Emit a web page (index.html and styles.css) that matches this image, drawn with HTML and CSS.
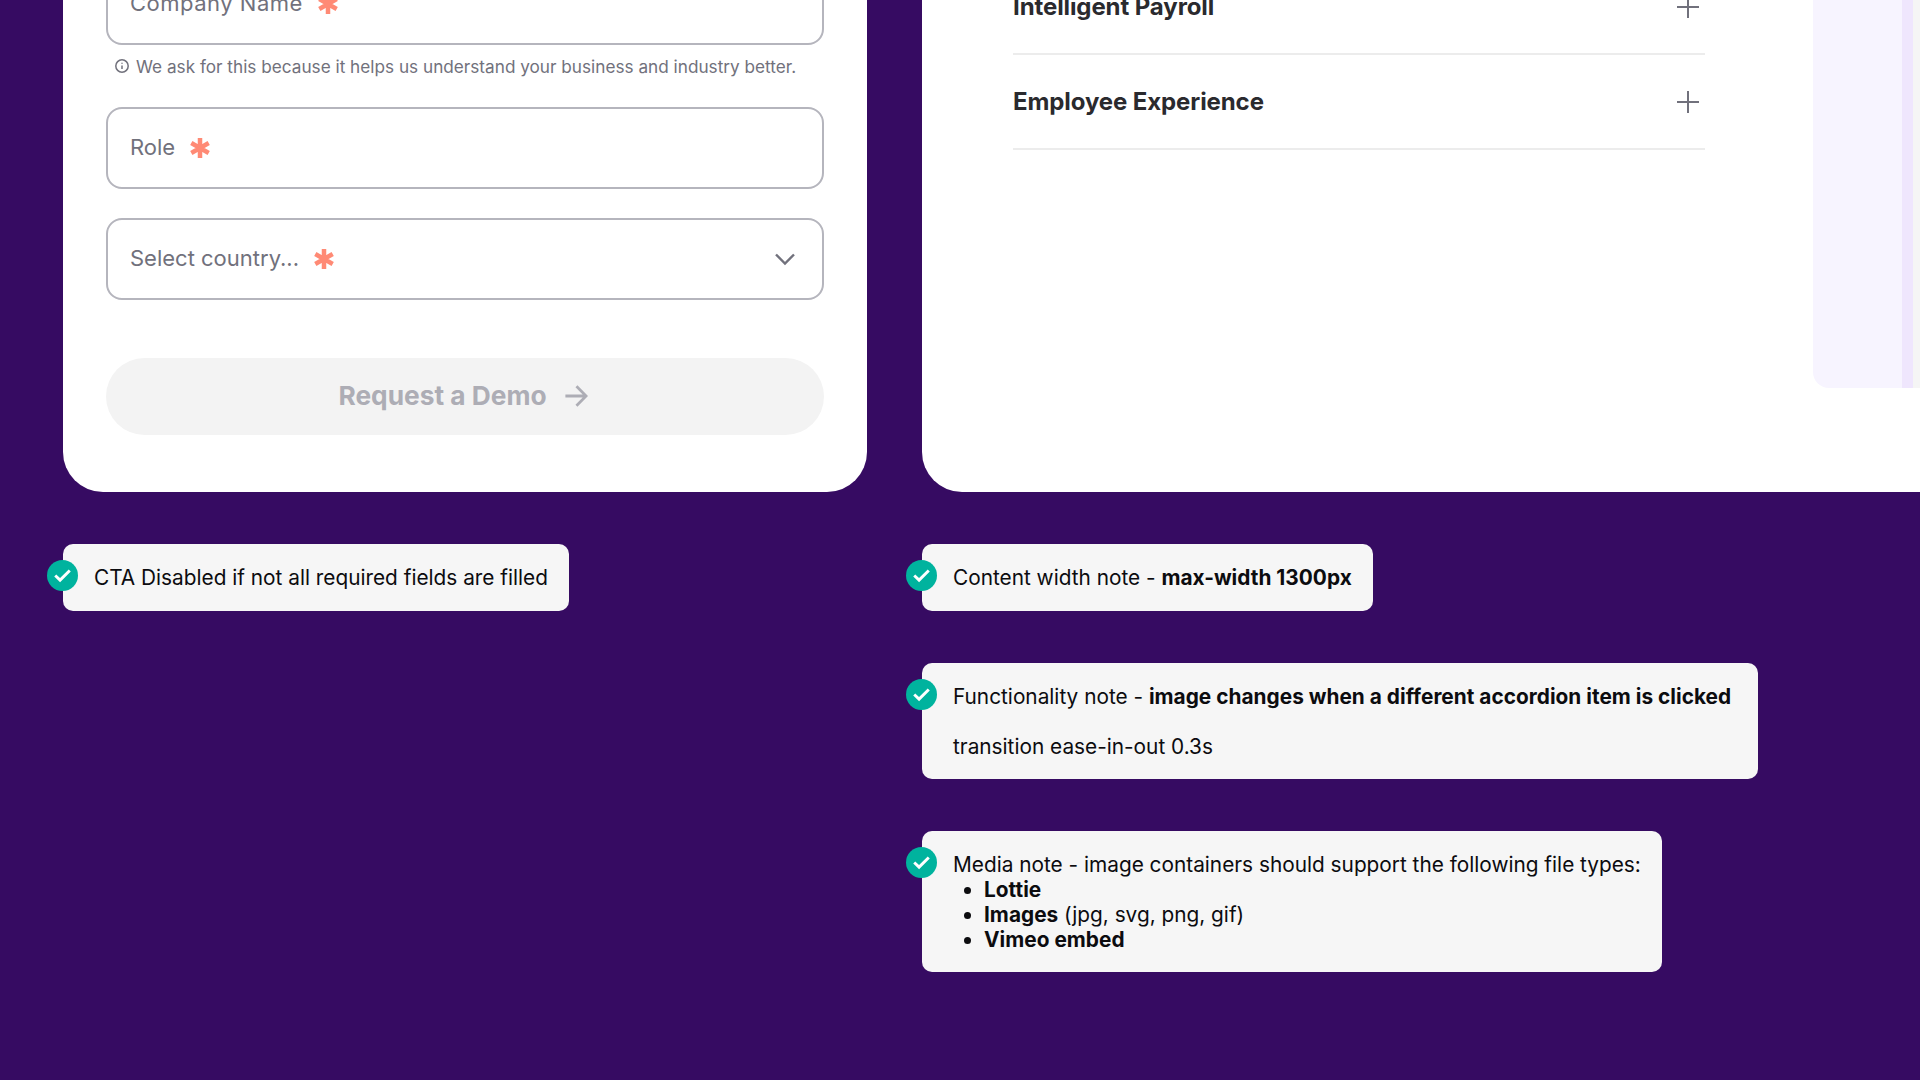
FILE: index.html
```html
<!DOCTYPE html>
<html lang="en">
<head>
    <meta charset="UTF-8">
    <meta name="viewport" content="width=device-width, initial-scale=1.0">
    <title>Request a Demo - spec notes</title>
    <link rel="stylesheet" href="styles.css">
</head>
<body>
    <div class="page">
        <div class="column">
            <form class="card form-card">
                <div class="field field-company">
                    <span>Company Name</span>
                    <svg class="req" viewBox="0 0 20 20"><path d="M10 0v20M1.3 5l17.4 10M18.7 5L1.3 15"/></svg>
                </div>
                <p class="hint">
                    <svg class="hint-icon" viewBox="0 0 16 16"><circle cx="8" cy="8" r="6.2"/><path d="M8 7.4v3.6M8 4.7v1.1"/></svg>
                    We ask for this because it helps us understand your business and industry better.
                </p>
                <div class="field field-role">
                    <span>Role</span>
                    <svg class="req" viewBox="0 0 20 20"><path d="M10 0v20M1.3 5l17.4 10M18.7 5L1.3 15"/></svg>
                </div>
                <div class="field field-select">
                    <span>Select country...</span>
                    <svg class="req" viewBox="0 0 20 20"><path d="M10 0v20M1.3 5l17.4 10M18.7 5L1.3 15"/></svg>
                    <svg class="chevron" viewBox="0 0 24 24"><path d="M3 7.5l9 9 9-9"/></svg>
                </div>
                <button class="cta" type="button" disabled>
                    Request a Demo
                    <svg class="cta-arrow" viewBox="0 0 26 26"><path d="M1.5 13h22M13.5 2.5L24 13 13.5 23.5"/></svg>
                </button>
            </form>
            <div class="note note-short">
                <span class="check"><svg viewBox="0 0 32 32"><path d="M8.5 16l5 4.8 10-10"/></svg></span>
                CTA Disabled if not all required fields are filled
            </div>
        </div>

        <div class="column column-wide">
            <div class="card media-card">
                <div class="accordion">
                    <div class="acc-row">
                        <span>Intelligent Payroll</span>
                        <svg class="plus" viewBox="0 0 22 22"><path d="M0 11h22M11 0v22"/></svg>
                    </div>
                    <div class="acc-row">
                        <span>Employee Experience</span>
                        <svg class="plus" viewBox="0 0 22 22"><path d="M0 11h22M11 0v22"/></svg>
                    </div>
                </div>
                <div class="media-panel">
                    <div class="media-strip"></div>
                    <div class="media-image"></div>
                </div>
            </div>
            <div class="note-list">
                <div class="note note-short">
                    <span class="check"><svg viewBox="0 0 32 32"><path d="M8.5 16l5 4.8 10-10"/></svg></span>
                    Content width note - <strong>max-width 1300px</strong>
                </div>
                <div class="note note-wide">
                    <span class="check"><svg viewBox="0 0 32 32"><path d="M8.5 16l5 4.8 10-10"/></svg></span>
                    <p>Functionality note - <strong>image changes when a different accordion item is clicked</strong></p>
                    <p>transition ease-in-out 0.3s</p>
                </div>
                <div class="note">
                    <span class="check"><svg viewBox="0 0 32 32"><path d="M8.5 16l5 4.8 10-10"/></svg></span>
                    Media note - image containers should support the following file types:
                    <ul>
                        <li><strong>Lottie</strong></li>
                        <li><strong>Images</strong> (jpg, svg, png, gif)</li>
                        <li><strong>Vimeo embed</strong></li>
                    </ul>
                </div>
            </div>
        </div>
    </div>
</body>
</html>
```
FILE: styles.css
```css
html, body {
    margin: 0;
    height: 1080px;
    overflow: hidden;
    background-color: #360b62;
}
.page {
    display: flex;
    align-items: flex-start;
    gap: 55px;
    margin-top: -60px;
    padding-left: 63px;
}
.column {
    flex: 0 0 804px;
    display: flex;
    flex-direction: column;
    align-items: flex-start;
    gap: 52px;
}
.column-wide {
    flex: 0 0 1300px;
}
.card {
    box-sizing: border-box;
    width: 100%;
    background: #fff;
    border-radius: 0 0 40px 40px;
}
.form-card {
    padding: 23px 43px 57px;
    font-family: "Inter", sans-serif;
    color: #71717c;
}
.field {
    box-sizing: border-box;
    display: flex;
    align-items: center;
    gap: 15px;
    height: 82px;
    padding: 0 25px 2px 22px;
    border: 2px solid #b5b5bd;
    border-radius: 16px;
    font-size: 22px;
}
.field-company {
    letter-spacing: 0.5px;
}
.field-role {
    margin-top: 30px;
}
.field-select {
    margin-top: 29px;
}
.req {
    width: 20px;
    height: 20px;
    margin-top: 2px;
    fill: none;
    stroke: #ff8a75;
    stroke-width: 4.5;
}
.chevron {
    width: 24px;
    height: 24px;
    margin-top: 2px;
    margin-left: auto;
    fill: none;
    stroke: #71717c;
    stroke-width: 2.4;
}
.hint {
    display: flex;
    align-items: center;
    gap: 6px;
    margin: 10px 0 0 8px;
    height: 22px;
    font-size: 17.2px;
}
.hint-icon {
    width: 16px;
    height: 16px;
    fill: none;
    stroke: #71717c;
    stroke-width: 1.5;
}
.cta {
    box-sizing: border-box;
    display: flex;
    align-items: center;
    justify-content: center;
    gap: 17px;
    width: 100%;
    height: 77px;
    margin-top: 58px;
    padding: 0 4px 2px 0;
    border: none;
    border-radius: 39px;
    background-color: #f3f3f3;
    color: #adadb5;
    font-family: inherit;
    font-size: 26.3px;
    font-weight: 700;
}
.cta-arrow {
    width: 24px;
    height: 24px;
    fill: none;
    stroke: #adadb5;
    stroke-width: 3;
}
.media-card {
    display: flex;
    padding-bottom: 104px;
    border-radius: 0 0 0 40px;
}
.accordion {
    flex: 0 0 692px;
    box-sizing: border-box;
    height: 448px;
    margin-left: 91px;
    padding-top: 20px;
}
.acc-row {
    box-sizing: border-box;
    display: flex;
    align-items: center;
    justify-content: space-between;
    height: 95px;
    padding-right: 6px;
    border-bottom: 2px solid #ececec;
    color: #2a2a2e;
    font-family: "Inter", sans-serif;
    font-size: 24px;
    font-weight: 700;
    letter-spacing: -0.1px;
}
.plus {
    width: 22px;
    height: 22px;
    fill: none;
    stroke: #71717c;
    stroke-width: 2;
}
.media-panel {
    flex: 1;
    display: flex;
    margin-left: 108px;
    padding-left: 89px;
    background-color: #f7f4ff;
    border-bottom-left-radius: 16px;
    overflow: hidden;
}
.media-strip {
    flex: 0 0 11px;
    background-color: #efe6fd;
}
.media-image {
    flex: 1;
    background-color: #f5f5f5;
}
.note-list {
    display: flex;
    flex-direction: column;
    align-items: flex-start;
    gap: 52px;
}
.note {
    position: relative;
    padding: 21px 21px 20px 31px;
    background-color: #f6f6f6;
    border-radius: 10px;
    color: #0c0c0f;
    font-family: "Inter", sans-serif;
    font-size: 20.8px;
    line-height: 25px;
}
.note-short {
    padding-bottom: 21px;
}
.note-wide {
    padding-right: 27px;
}
.note strong {
    letter-spacing: 0.03px;
}
.note p {
    margin: 0;
}
.note p + p {
    margin-top: 25px;
}
.note ul {
    margin: 0;
    padding-left: 31px;
}
.check {
    position: absolute;
    left: -16px;
    top: 16px;
    width: 31px;
    height: 31px;
    border-radius: 50%;
    background-color: #00b39e;
}
.check svg {
    display: block;
    width: 100%;
    height: 100%;
    fill: none;
    stroke: #fff;
    stroke-width: 3;
}
```
